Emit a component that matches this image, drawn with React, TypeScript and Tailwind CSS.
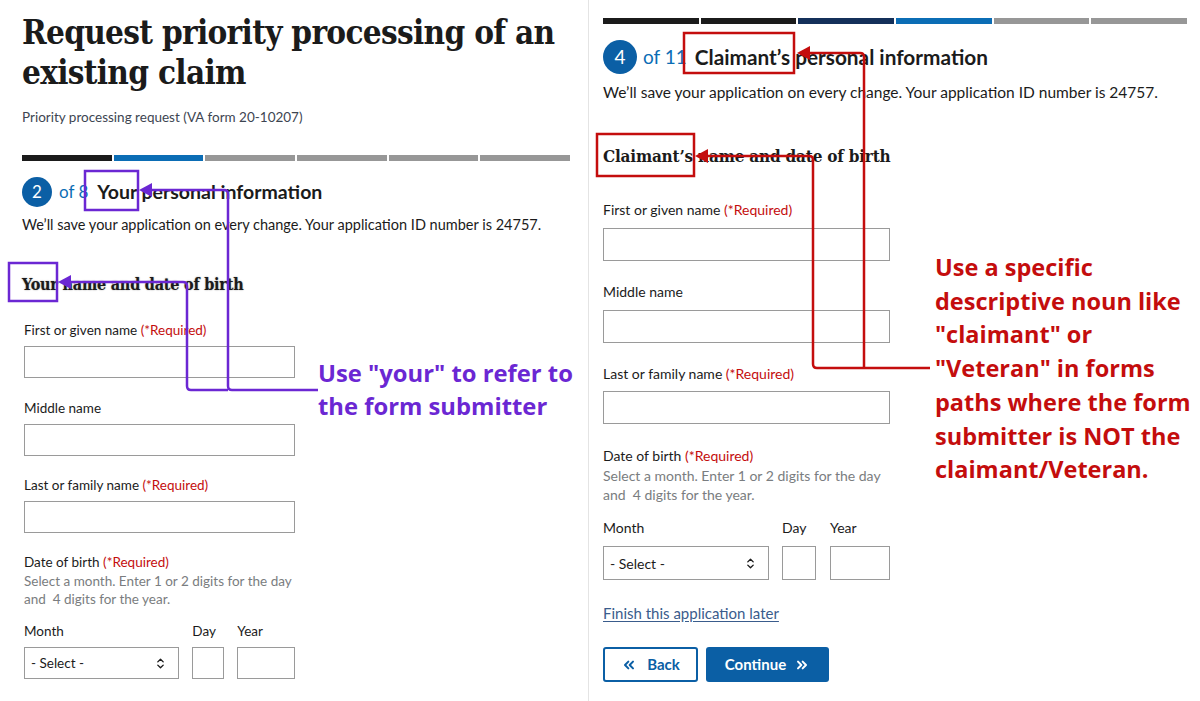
import React from 'react';
import { ChevronsUpDown, ChevronsLeft, ChevronsRight } from 'lucide-react';

const sans = "font-['Lato','Noto_Sans',sans-serif]";
const serif = "font-['DejaVu_Serif_Condensed','DejaVu_Serif',serif] [font-stretch:condensed]";
const callout = "font-['Open_Sans','Lato',sans-serif]";

function Req() {
  return <span className="text-[#c40d0d]"> (*Required)</span>;
}

function Progress({ colors }: { colors: string[] }) {
  return (
    <div className="flex h-[6px] gap-[2px]">
      {colors.map((c, i) => (
        <div key={i} className={`flex-1 ${c}`} />
      ))}
    </div>
  );
}

function LeftPanel() {
  return (
    <div className={`w-[589px] shrink-0 border-r border-[#e4e4e4] pl-[22px] pr-[18px] pt-[13px] text-[#1b1b1b] ${sans}`}>
      <h1 className={`${serif} whitespace-nowrap text-[33px] font-bold leading-[40px] tracking-[-0.7px] text-[#1b1b1b]`}>
        Request priority processing of an
        <br />
        existing claim
      </h1>
      <p className="mt-[14px] text-[13.5px] leading-[20px] text-[#3d4551]">Priority processing request (VA form 20-10207)</p>
      <div className="mt-[28px]">
        <Progress colors={['bg-[#1b1b1b]', 'bg-[#0b6db5]', 'bg-[#979797]', 'bg-[#979797]', 'bg-[#979797]', 'bg-[#979797]']} />
      </div>
      <div className="mt-[16px] flex h-[30px] items-center">
        <div className="flex h-[30px] w-[30px] items-center justify-center rounded-full bg-[#0b5fa5] text-[17px] text-white">2</div>
        <span className="ml-[7px] text-[17px] text-[#0b6db5]">of 8</span>
        <span className="ml-[9px] text-[19.5px] font-bold">Your personal information</span>
      </div>
      <p className="mt-[7px] text-[14.5px] leading-[22px]">We’ll save your application on every change. Your application ID number is 24757.</p>
      <h2 className={`${serif} mt-[37px] text-[16px] font-bold leading-[24px] tracking-[-0.2px] [text-shadow:0_0_1.5px_rgba(0,0,0,0.45)]`}>
        Your name and date of birth
      </h2>
      <div className="flex">
        <div className="w-[273px] shrink-0 pl-[2px] text-[13.5px]">
          <div className="mt-[23px] leading-[20px]">First or given name<Req /></div>
          <div className="mt-[6px] h-[32px] border-[1.5px] border-[#9a9a9a]" />
          <div className="mt-[20px] leading-[20px]">Middle name</div>
          <div className="mt-[6px] h-[32px] border-[1.5px] border-[#9a9a9a]" />
          <div className="mt-[19px] leading-[20px]">Last or family name<Req /></div>
          <div className="mt-[6px] h-[32px] border-[1.5px] border-[#9a9a9a]" />
          <div className="mt-[19px] leading-[20px]">Date of birth<Req /></div>
          <p className="text-[13.5px] leading-[18px] text-[#7a7d80]">Select a month. Enter 1 or 2 digits for the day and&nbsp; 4 digits for the year.</p>
          <div className="mt-[13px] flex">
            <div className="w-[156px]">
              <div className="leading-[20px]">Month</div>
              <div className="mt-[6px] flex h-[32px] items-center justify-between border-[1.5px] border-[#9a9a9a] pl-[6px] pr-[11px]">
                <span>- Select -</span>
                <ChevronsUpDown size={13} strokeWidth={2.5} />
              </div>
            </div>
            <div className="ml-[13px] w-[32px]">
              <div className="leading-[20px]">Day</div>
              <div className="mt-[6px] h-[32px] border-[1.5px] border-[#9a9a9a]" />
            </div>
            <div className="ml-[13px] w-[58px]">
              <div className="leading-[20px]">Year</div>
              <div className="mt-[6px] h-[32px] border-[1.5px] border-[#9a9a9a]" />
            </div>
          </div>
        </div>
        <p className={`${callout} ml-[23px] mt-[60px] whitespace-nowrap text-[23.8px] font-bold leading-[33px] text-[#6b27d3]`}>
          Use "your" to refer to
          <br />
          the form submitter
        </p>
      </div>
    </div>
  );
}

function RightPanel() {
  return (
    <div className={`min-w-0 flex-1 pl-[14px] pr-[13px] pt-[18px] text-[#1b1b1b] ${sans}`}>
      <Progress colors={['bg-[#1b1b1b]', 'bg-[#1b1b1b]', 'bg-[#14305a]', 'bg-[#0b6db5]', 'bg-[#979797]', 'bg-[#979797]']} />
      <div className="mt-[16px] flex h-[34px] items-center">
        <div className="flex h-[34px] w-[34px] items-center justify-center rounded-full bg-[#0b5fa5] text-[19px] text-white">4</div>
        <span className="ml-[6px] text-[19px] text-[#0b6db5]">of 11</span>
        <span className="ml-[8px] text-[20.8px] font-bold">Claimant’s personal information</span>
      </div>
      <p className="mt-[7px] text-[15.5px] leading-[22px]">We’ll save your application on every change. Your application ID number is 24757.</p>
      <div className="flex">
        <div className="w-[287px] shrink-0 text-[14px]">
          <h2 className={`${serif} mt-[40px] w-max text-[17px] font-bold leading-[26px] tracking-[-0.2px]`}>
            Claimant’s name and date of birth
          </h2>
          <div className="mt-[31px] leading-[20px]">First or given name<Req /></div>
          <div className="mt-[8px] h-[33px] border-[1.5px] border-[#9a9a9a]" />
          <div className="mt-[21px] leading-[20px]">Middle name</div>
          <div className="mt-[8px] h-[33px] border-[1.5px] border-[#9a9a9a]" />
          <div className="mt-[21px] leading-[20px]">Last or family name<Req /></div>
          <div className="mt-[7px] h-[33px] border-[1.5px] border-[#9a9a9a]" />
          <div className="mt-[22px] leading-[20px]">Date of birth<Req /></div>
          <p className="text-[14px] leading-[19px] text-[#7a7d80]">Select a month. Enter 1 or 2 digits for the day and&nbsp; 4 digits for the year.</p>
          <div className="mt-[14px] flex">
            <div className="w-[166px]">
              <div className="leading-[20px]">Month</div>
              <div className="mt-[8px] flex h-[34px] items-center justify-between border-[1.5px] border-[#9a9a9a] pl-[6px] pr-[11px]">
                <span>- Select -</span>
                <ChevronsUpDown size={13} strokeWidth={2.5} />
              </div>
            </div>
            <div className="ml-[13px] w-[34px]">
              <div className="leading-[20px]">Day</div>
              <div className="mt-[8px] h-[34px] border-[1.5px] border-[#9a9a9a]" />
            </div>
            <div className="ml-[14px] w-[60px]">
              <div className="leading-[20px]">Year</div>
              <div className="mt-[8px] h-[34px] border-[1.5px] border-[#9a9a9a]" />
            </div>
          </div>
          <div className="mt-[23px] text-[15px] leading-[20px] text-[#3a5c8c] underline underline-offset-2">Finish this application later</div>
          <div className="mt-[24px] flex gap-[8px]">
            <button className="flex h-[35px] w-[95px] items-center justify-center gap-[10px] rounded-[3px] border-2 border-[#0b5fa5] text-[15px] font-bold text-[#0b5fa5]">
              <ChevronsLeft size={16} strokeWidth={3} /> Back
            </button>
            <button className="flex h-[35px] w-[123px] items-center justify-center gap-[8px] rounded-[3px] bg-[#0b5fa5] text-[15px] font-bold text-white">
              Continue <ChevronsRight size={16} strokeWidth={3} />
            </button>
          </div>
        </div>
        <p className={`${callout} ml-[45px] mt-[148px] whitespace-nowrap text-[23.5px] font-bold leading-[33.7px] text-[#c40d0d]`}>
          Use a specific
          <br />
          descriptive noun like
          <br />
          "claimant" or
          <br />
          "Veteran" in forms
          <br />
          paths where the form
          <br />
          submitter is NOT the
          <br />
          claimant/Veteran.
        </p>
      </div>
    </div>
  );
}

function Annotations() {
  const purple = '#6b27d3';
  const red = '#c40d0d';
  return (
    <svg className="pointer-events-none absolute inset-0" width="1200" height="701" viewBox="0 0 1200 701" fill="none">
      <g stroke={purple} strokeWidth="2.5">
        <rect x="85" y="171" width="53" height="39" />
        <rect x="9" y="263" width="48" height="38" />
        <path d="M318 390 H232 Q228 390 228 386 V194 Q228 190 224 190 H150" />
        <path d="M228 390 H191 Q187 390 187 386 V286 Q187 282 183 282 H68" />
      </g>
      <g fill={purple}>
        <polygon points="139,190 152,183 152,197" />
        <polygon points="58,282 71,275 71,289" />
      </g>
      <g stroke={red} strokeWidth="2.5">
        <rect x="684" y="33" width="110" height="40" />
        <rect x="597" y="134" width="97" height="42" />
        <path d="M930 368 H817 Q813 368 813 364 V160 Q813 156 809 156 H706" />
        <path d="M864 368 V57 Q864 53 860 53 H808" />
      </g>
      <g fill={red}>
        <polygon points="695,156 708,149 708,163" />
        <polygon points="797,53 810,46 810,60" />
      </g>
    </svg>
  );
}

export default function App() {
  return (
    <div className="relative flex h-[701px] w-[1200px] overflow-hidden bg-white">
      <LeftPanel />
      <RightPanel />
      <Annotations />
    </div>
  );
}
